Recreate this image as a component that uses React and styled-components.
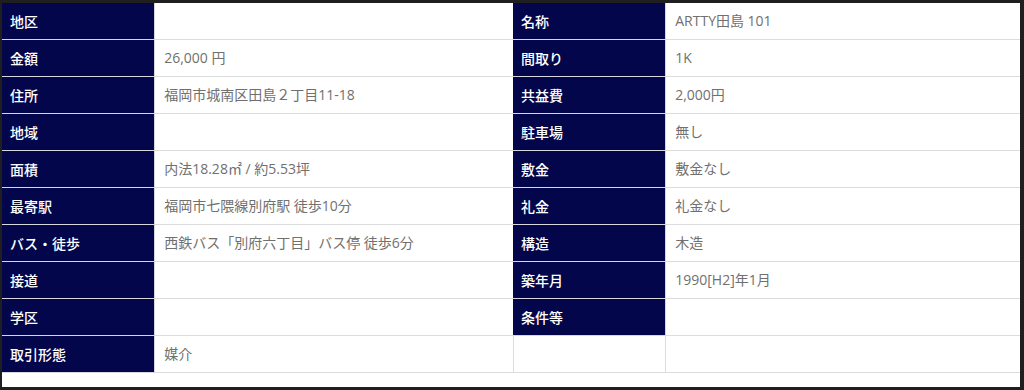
import styled, { createGlobalStyle } from "styled-components";

const GlobalStyle = createGlobalStyle`
  html, body {
    margin: 0;
    padding: 0;
    background: #1f1f1f;
  }
  body {
    font-family: "Open Sans", "Noto Sans CJK JP", sans-serif;
  }
`;

const rows = [
  ["地区", "", "名称", "ARTTY田島 101"],
  ["金額", "26,000 円", "間取り", "1K"],
  ["住所", "福岡市城南区田島２丁目11-18", "共益費", "2,000円"],
  ["地域", "", "駐車場", "無し"],
  ["面積", "内法18.28㎡ / 約5.53坪", "敷金", "敷金なし"],
  ["最寄駅", "福岡市七隈線別府駅 徒歩10分", "礼金", "礼金なし"],
  ["バス・徒歩", "西鉄バス「別府六丁目」バス停 徒歩6分", "構造", "木造"],
  ["接道", "", "築年月", "1990[H2]年1月"],
  ["学区", "", "条件等", ""],
  ["取引形態", "媒介", null, ""],
];

export default function App() {
  return (
    <>
      <GlobalStyle />
      <Frame>
        <SpecTable>
          <colgroup>
            <Col $w="15%" />
            <Col $w="35.2%" />
            <Col $w="15%" />
            <Col $w="34.8%" />
          </colgroup>
          <tbody>
            {rows.map(([k1, v1, k2, v2]) => (
              <tr key={k1}>
                <Label>{k1}</Label>
                <Value>{v1}</Value>
                {k2 === null ? <Value /> : <Label>{k2}</Label>}
                <Value>{v2}</Value>
              </tr>
            ))}
          </tbody>
        </SpecTable>
      </Frame>
    </>
  );
}

const Frame = styled.div`
  margin: 3px 4px 0 2px;
  height: 384px;
  background: #fff;
  box-sizing: border-box;
  overflow: hidden;
`;

const SpecTable = styled.table`
  width: 100%;
  table-layout: fixed;
  border-collapse: collapse;
  font-size: 14px;
  line-height: 20px;
`;

const Col = styled.col`
  width: ${(p) => p.$w};
`;

const Label = styled.th`
  background: #03064a;
  color: #fff;
  font-weight: 500;
  text-align: left;
  padding: 8px 8px;
  height: 20px;
  border: 1px solid #d6d6dc;
  border-top: none;
  border-left: none;
  font-family: "Noto Sans CJK JP", sans-serif;
  white-space: nowrap;
`;

const Value = styled.td`
  color: #707070;
  padding: 8px 9px;
  height: 20px;
  border: 1px solid #dcdcdc;
  border-top: none;
  border-right: none;
  white-space: nowrap;
`;
